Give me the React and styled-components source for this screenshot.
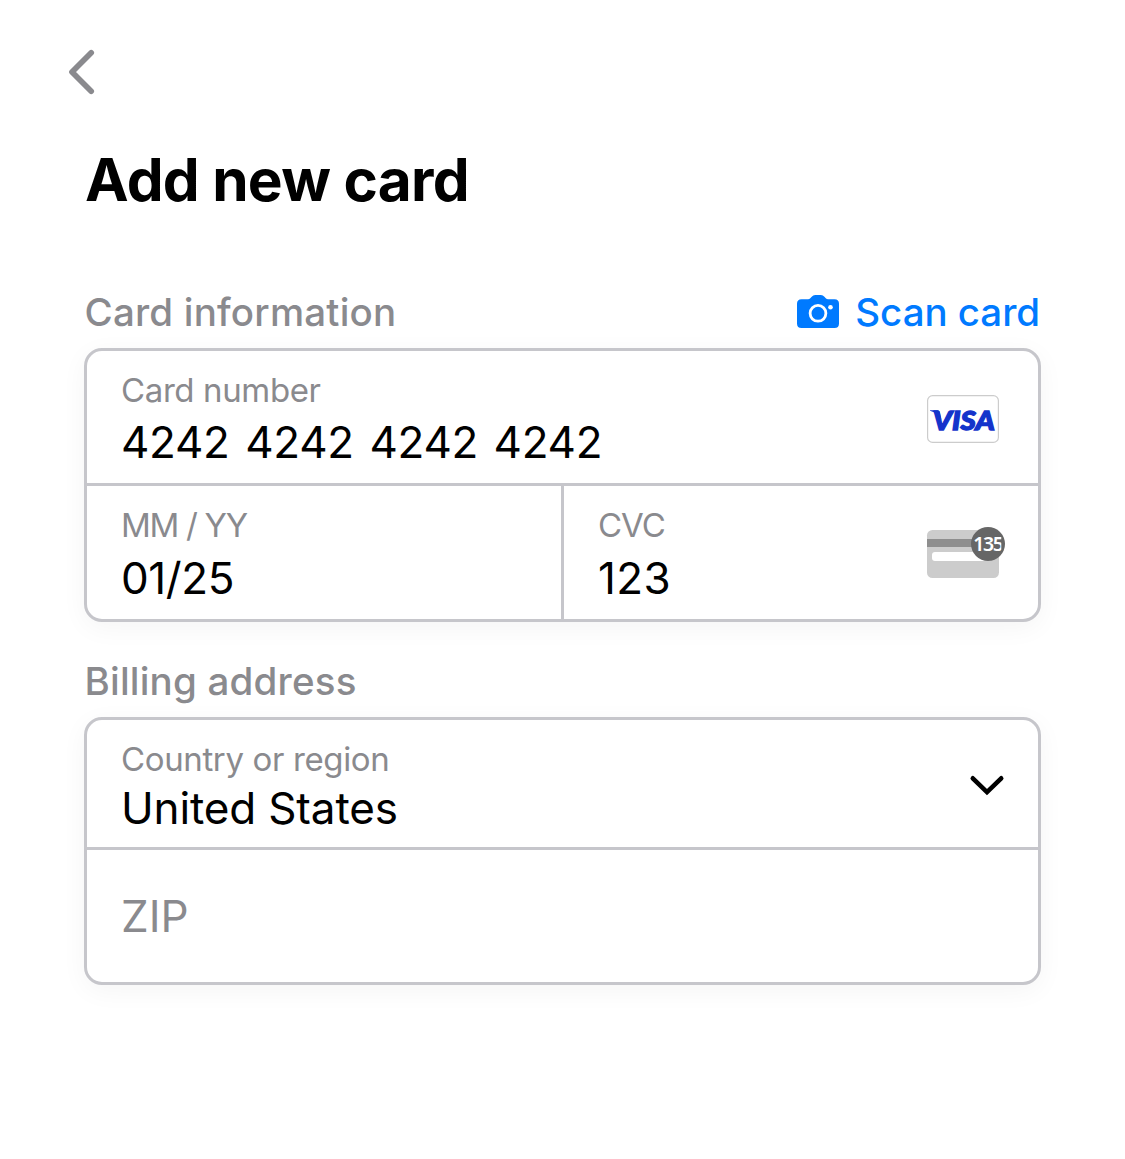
import React from "react";
import styled, { createGlobalStyle } from "styled-components";

const GlobalStyle = createGlobalStyle`
  * { box-sizing: border-box; }
  body {
    margin: 0;
    background: #fff;
    font-family: Inter, Roboto, "Liberation Sans", sans-serif;
    font-kerning: normal;
  }
`;

const Page = styled.main`
  display: flex;
  flex-direction: column;
  width: 1125px;
  height: 1159px;
  padding: 48px 84px 0;
  background: #fff;
`;

const BackButton = styled.button`
  display: block;
  width: 32px;
  height: 48px;
  margin: 0 0 0 -18px;
  padding: 0;
  border: 0;
  background: none;
`;

const Title = styled.h1`
  margin: 44px 0 0 1px;
  font-size: 58.5px;
  font-weight: 700;
  line-height: 80px;
  letter-spacing: ${(p) => p.$tracking}px;
  white-space: nowrap;
`;

const SectionHeader = styled.div`
  display: flex;
  align-items: center;
  justify-content: space-between;
  height: 48px;
  margin-top: ${(p) => p.$top}px;
`;

const SectionLabel = styled.h2`
  margin: 0 0 0 0.5px;
  color: #8a8a8e;
  font-size: 38.5px;
  font-weight: 500;
  line-height: 48px;
  letter-spacing: ${(p) => p.$tracking}px;
  white-space: nowrap;
`;

const ScanButton = styled.button`
  display: flex;
  align-items: center;
  gap: 16px;
  padding: 0 1px 0 0;
  border: 0;
  background: none;
  color: #007aff;
  font: 500 38.5px/48px Inter, sans-serif;
  letter-spacing: ${(p) => p.$tracking}px;
  white-space: nowrap;
`;

const FieldGroup = styled.section`
  display: flex;
  flex-direction: column;
  width: 957px;
  height: ${(p) => p.$height}px;
  margin-top: 12px;
  border: 3px solid #c6c6cb;
  border-radius: 18px;
  background: #fff;
  box-shadow: 0 6px 27px rgba(0, 0, 0, 0.045);
`;

const Row = styled.div`
  display: flex;
  height: ${(p) => p.$height}px;
  border-top: ${(p) => (p.$divided ? "3px solid #c6c6cb" : "0")};
`;

const Field = styled.div`
  display: flex;
  flex: 1;
  align-items: center;
  justify-content: space-between;
  padding: 0 ${(p) => p.$right ?? 39}px 0 34px;
  border-left: ${(p) => (p.$divided ? "3px solid #c6c6cb" : "0")};
`;

const FieldText = styled.div`
  display: flex;
  flex-direction: column;
  align-self: flex-start;
  padding-top: ${(p) => p.$top ?? 19}px;
`;

const FieldLabel = styled.label`
  color: #8a8a8e;
  font-size: 33px;
  line-height: 40px;
  letter-spacing: ${(p) => p.$tracking}px;
  white-space: nowrap;
`;

const FieldValue = styled.div`
  color: ${(p) => (p.$placeholder ? "#8a8a8e" : "#000")};
  margin-top: ${(p) => p.$top ?? 4}px;
  font-size: 44px;
  line-height: 56px;
  letter-spacing: ${(p) => p.$tracking}px;
  word-spacing: ${(p) => p.$wordGap ?? 0}px;
  white-space: nowrap;
`;

const Icon = styled.svg`
  display: block;
  flex: none;
  overflow: visible;
  margin-top: ${(p) => p.$drop ?? 0}px;
`;

function BackChevron() {
  return (
    <Icon width="32" height="48" viewBox="66 48 32 48" fill="none">
      <path d="M91.2 52.8 72 72l19.2 19.2" stroke="#8a8a8e" strokeWidth="5.7" strokeLinecap="round" strokeLinejoin="round" />
    </Icon>
  );
}

function CameraIcon() {
  return (
    <Icon width="42" height="34" viewBox="797 295 42 34">
      <path d="M801.5 299.3H808q1.4 0 2.3-1l1.4-1.6q1.4-1.6 3.5-1.6h5.7q2.1 0 3.5 1.6l1.4 1.6q.9 1 2.3 1h6.4q4.5 0 4.5 4.5v19.7q0 4.5-4.5 4.5h-33q-4.5 0-4.5-4.5v-19.7q0-4.5 4.5-4.5z" fill="#007aff" />
      <circle cx="818" cy="313.3" r="7.9" fill="none" stroke="#fff" strokeWidth="2.8" />
      <circle cx="830.5" cy="307.2" r="2.3" fill="#fff" />
    </Icon>
  );
}

function VisaBadge() {
  return (
    <Icon width="72" height="48" viewBox="927 395 72 48" $drop={4}>
      <rect x="927.6" y="395.6" width="70.8" height="46.8" rx="5" fill="#fff" stroke="#ccc" strokeWidth="1.2" />
      <path d="M930 410.2h7.5q1.8 0 2.3 1.8l1.7 8q-3-6.6-11.5-9.2z" fill="#1434cb" />
      <text x="932.8" y="429.5" fill="#1434cb" stroke="#1434cb" strokeWidth="1.3" fontFamily="Lato, sans-serif" fontWeight="900" fontStyle="italic" fontSize="26.4" textLength="62" lengthAdjust="spacingAndGlyphs">VISA</text>
    </Icon>
  );
}

function CvcIcon() {
  return (
    <Icon width="72" height="48" viewBox="927 530 72 48" $drop={2}>
      <defs>
        <clipPath id="digits"><rect x="972" y="530" width="29.3" height="28" /></clipPath>
      </defs>
      <rect x="927" y="530" width="72" height="48" rx="5.5" fill="#ccc" />
      <rect x="927" y="539" width="72" height="8" fill="#8e8e8e" />
      <rect x="932" y="552" width="60" height="9" rx="3" fill="#fff" />
      <circle cx="988" cy="544" r="17" fill="#666" />
      <text x="973.2" y="551" clipPath="url(#digits)" fill="#fff" fontFamily="Noto Sans, sans-serif" fontWeight="600" fontSize="19.5" textLength="30.8" lengthAdjust="spacing">135</text>
    </Icon>
  );
}

function DownChevron() {
  return (
    <Icon width="34" height="20" viewBox="970 776 34 20" fill="none" $drop={4}>
      <path d="M972.8 778.3 987 792.1l14.2-13.8" stroke="#000" strokeWidth="4.6" strokeLinecap="round" strokeLinejoin="miter" />
    </Icon>
  );
}

export default function App() {
  return (
    <>
      <GlobalStyle />
      <Page>
        <BackButton aria-label="Back"><BackChevron /></BackButton>
        <Title $tracking={-0.7}>Add new card</Title>

        <SectionHeader $top={68}>
          <SectionLabel $tracking={0.2}>Card information</SectionLabel>
          <ScanButton $tracking={-0.05}><CameraIcon />Scan card</ScanButton>
        </SectionHeader>
        <FieldGroup $height={274}>
          <Row $height={132}>
            <Field>
              <FieldText>
                <FieldLabel $tracking={-0.38}>Card number</FieldLabel>
                <FieldValue $tracking={-0.3} $wordGap={3.5}>4242 4242 4242 4242</FieldValue>
              </FieldText>
              <VisaBadge />
            </Field>
          </Row>
          <Row $height={136} $divided>
            <Field>
              <FieldText>
                <FieldLabel $tracking={-1.3}>MM / YY</FieldLabel>
                <FieldValue $top={5} $tracking={-0.4}>01/25</FieldValue>
              </FieldText>
            </Field>
            <Field $divided>
              <FieldText>
                <FieldLabel $tracking={-1}>CVC</FieldLabel>
                <FieldValue $top={5} $tracking={0.4}>123</FieldValue>
              </FieldText>
              <CvcIcon />
            </Field>
          </Row>
        </FieldGroup>

        <SectionHeader $top={35}>
          <SectionLabel $tracking={0.2}>Billing address</SectionLabel>
        </SectionHeader>
        <FieldGroup $height={268}>
          <Row $height={127}>
            <Field $right={34}>
              <FieldText>
                <FieldLabel $tracking={-0.37}>Country or region</FieldLabel>
                <FieldValue $top={1} $tracking={-0.15}>United States</FieldValue>
              </FieldText>
              <DownChevron />
            </Field>
          </Row>
          <Row $height={135} $divided>
            <Field>
              <FieldText $top={38}>
                <FieldValue $top={0} $tracking={0} $placeholder>ZIP</FieldValue>
              </FieldText>
            </Field>
          </Row>
        </FieldGroup>
      </Page>
    </>
  );
}
